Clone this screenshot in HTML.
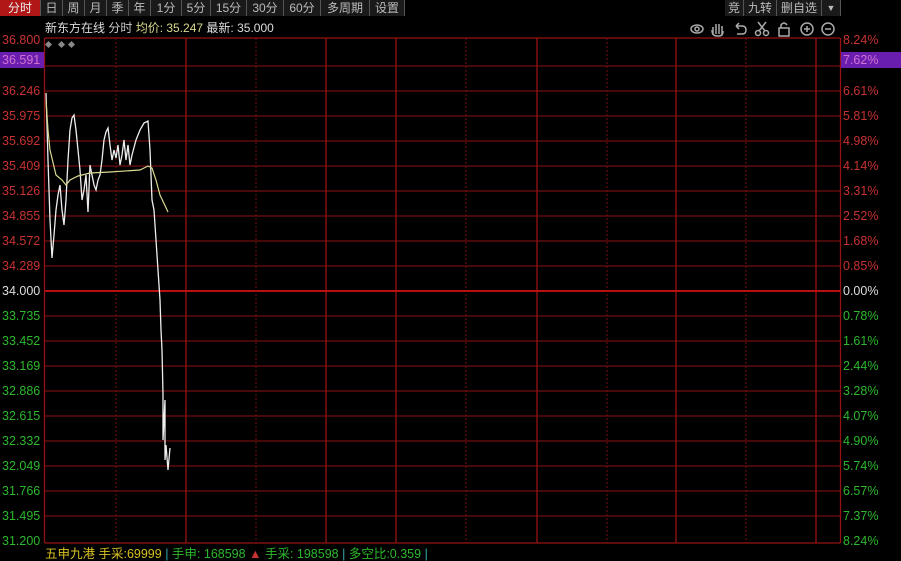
<!DOCTYPE html>
<html><head><meta charset="utf-8"><style>
html,body{margin:0;padding:0;background:#000;width:901px;height:552px;overflow:hidden;font-family:"Liberation Sans","Noto Sans CJK SC",sans-serif;}
.tabs{position:absolute;left:0;top:0;height:17px;width:901px;background:#000;}
.tab{position:absolute;top:0;height:16px;line-height:16px;font-size:12px;color:#bbb;background:#1a1a1a;border-right:1px solid #555;text-align:center}
.lab{position:absolute;font-size:12.5px;line-height:14px;}
</style></head><body>
<div class="tabs">
<div class="tab" style="left:0;width:40px;background:#b01818;color:#eee">分时</div>
<div class="tab" style="left:41px;width:21px">日</div>
<div class="tab" style="left:63px;width:21px">周</div>
<div class="tab" style="left:85px;width:21px">月</div>
<div class="tab" style="left:107px;width:21px">季</div>
<div class="tab" style="left:129px;width:21px">年</div>
<div class="tab" style="left:151px;width:30px">1分</div>
<div class="tab" style="left:182px;width:28px">5分</div>
<div class="tab" style="left:211px;width:35px">15分</div>
<div class="tab" style="left:247px;width:36px">30分</div>
<div class="tab" style="left:284px;width:36px">60分</div>
<div class="tab" style="left:321px;width:48px">多周期</div>
<div class="tab" style="left:370px;width:34px">设置</div>
<div class="tab" style="left:725px;width:18px">竞</div>
<div class="tab" style="left:744px;width:32px">九转</div>
<div class="tab" style="left:777px;width:44px">删自选</div>
<div class="tab" style="left:822px;width:18px;font-size:9px">▼</div>
</div>
<div class="lab" style="left:45px;top:21px;font-size:12px;color:#ddd">新东方在线 <span style="color:#ccc">分时</span> <span style="color:#d8d890">均价: 35.247</span> <span style="color:#ddd">最新: 35.000</span></div>
<svg style="position:absolute;left:0;top:0" width="901" height="552">
<g fill="none" stroke="#aaa" stroke-width="1.5">
<ellipse cx="697" cy="29" rx="6" ry="4"/><circle cx="697" cy="29" r="2"/>
<path d="M713 35 v-8 M716 34 v-10 M719 34 v-10 M722 34 v-8 M712 30 q0 6 5 6 h2 q4 0 4-5"/>
<path d="M736 26 h6 q4 0 4 4 t-4 4 h-5 M736 26 l3-3 M736 26 l3 3"/>
<circle cx="758" cy="33" r="2.5"/><circle cx="766" cy="33" r="2.5"/><path d="M759 31 l7-9 M765 31 l-7-9"/>
<rect x="779" y="28" width="10" height="8"/><path d="M781 28 v-3 q3-4 6 0"/>
<circle cx="807" cy="29" r="6"/><path d="M804 29 h6 M807 26 v6"/>
<circle cx="828" cy="29" r="6"/><path d="M825 29 h6"/>
</g>
<g fill="#888"><rect x="46" y="42" width="5" height="5" transform="rotate(45 48.5 44.5)"/><rect x="59" y="42" width="5" height="5" transform="rotate(45 61.5 44.5)"/><rect x="69" y="42" width="5" height="5" transform="rotate(45 71.5 44.5)"/></g>
<g stroke="#8c1010" stroke-width="1">
<path d="M45 66h795M45 91h795M45 116h795M45 141h795M45 166h795M45 191h795M45 216h795M45 241h795M45 266h795M45 316h795M45 341h795M45 366h795M45 391h795M45 416h795M45 441h795M45 466h795M45 491h795M45 516h795"/>
</g>
<g stroke="#961212" stroke-width="1.3">
<path d="M45 38h795M45 543h795M44.5 38v505M840.5 38v505M186 38v505M326 38v505M396 38v505M537 38v505M676 38v505M816 38v505"/>
</g>
<g stroke="#7a0e0e" stroke-width="1" stroke-dasharray="2,2">
<path d="M116 38v505M256 38v505M466 38v505M607 38v505M746 38v505"/>
</g>
<path d="M45 291h795" stroke="#b81010" stroke-width="2"/>
<polyline fill="none" stroke="#eee" stroke-width="1.3" points="46,93 47,125 48,160 50,220 52,258 54,235 56,210 58,195 60,185 62,210 64,225 66,200 68,160 70,130 72,118 74,115 76,130 78,150 80,170 82,200 84,190 86,175 88,212 90,165 92,175 94,185 96,190 98,180 100,175 102,160 104,140 106,132 108,128 110,145 112,160 114,150 116,158 118,145 120,165 122,155 124,140 126,160 128,145 130,165 132,155 136,140 140,130 144,123 148,121 150,150 152,200 154,210 156,240 158,270 160,300 161,330 162,350 163,395 163,440 165,400 165,460 166,445 168,470 170,448"/>
<polyline fill="none" stroke="#d8d890" stroke-width="1.2" points="46,100 48,130 50,150 56,175 62,180 66,185 70,180 78,176 90,173 110,172 140,170 148,166 152,168 156,180 160,195 168,212"/>
</svg>
<div style="position:absolute;left:0;top:52px;width:44px;height:16px;background:#6a1eb0"></div>
<div style="position:absolute;left:841px;top:52px;width:60px;height:16px;background:#6a1eb0"></div>
<div class="lab" style="left:2px;top:33px;color:#c83232">36.800</div>
<div class="lab" style="left:2px;top:53px;color:#d070d0">36.591</div>
<div class="lab" style="left:2px;top:84px;color:#c83232">36.246</div>
<div class="lab" style="left:2px;top:109px;color:#c83232">35.975</div>
<div class="lab" style="left:2px;top:134px;color:#c83232">35.692</div>
<div class="lab" style="left:2px;top:159px;color:#c83232">35.409</div>
<div class="lab" style="left:2px;top:184px;color:#c83232">35.126</div>
<div class="lab" style="left:2px;top:209px;color:#c83232">34.855</div>
<div class="lab" style="left:2px;top:234px;color:#c83232">34.572</div>
<div class="lab" style="left:2px;top:259px;color:#c83232">34.289</div>
<div class="lab" style="left:2px;top:284px;color:#ddd">34.000</div>
<div class="lab" style="left:2px;top:309px;color:#2db82d">33.735</div>
<div class="lab" style="left:2px;top:334px;color:#2db82d">33.452</div>
<div class="lab" style="left:2px;top:359px;color:#2db82d">33.169</div>
<div class="lab" style="left:2px;top:384px;color:#2db82d">32.886</div>
<div class="lab" style="left:2px;top:409px;color:#2db82d">32.615</div>
<div class="lab" style="left:2px;top:434px;color:#2db82d">32.332</div>
<div class="lab" style="left:2px;top:459px;color:#2db82d">32.049</div>
<div class="lab" style="left:2px;top:484px;color:#2db82d">31.766</div>
<div class="lab" style="left:2px;top:509px;color:#2db82d">31.495</div>
<div class="lab" style="left:2px;top:534px;color:#2db82d">31.200</div>
<div class="lab" style="left:843px;top:33px;color:#c83232">8.24%</div>
<div class="lab" style="left:843px;top:53px;color:#d070d0">7.62%</div>
<div class="lab" style="left:843px;top:84px;color:#c83232">6.61%</div>
<div class="lab" style="left:843px;top:109px;color:#c83232">5.81%</div>
<div class="lab" style="left:843px;top:134px;color:#c83232">4.98%</div>
<div class="lab" style="left:843px;top:159px;color:#c83232">4.14%</div>
<div class="lab" style="left:843px;top:184px;color:#c83232">3.31%</div>
<div class="lab" style="left:843px;top:209px;color:#c83232">2.52%</div>
<div class="lab" style="left:843px;top:234px;color:#c83232">1.68%</div>
<div class="lab" style="left:843px;top:259px;color:#c83232">0.85%</div>
<div class="lab" style="left:843px;top:284px;color:#ddd">0.00%</div>
<div class="lab" style="left:843px;top:309px;color:#2db82d">0.78%</div>
<div class="lab" style="left:843px;top:334px;color:#2db82d">1.61%</div>
<div class="lab" style="left:843px;top:359px;color:#2db82d">2.44%</div>
<div class="lab" style="left:843px;top:384px;color:#2db82d">3.28%</div>
<div class="lab" style="left:843px;top:409px;color:#2db82d">4.07%</div>
<div class="lab" style="left:843px;top:434px;color:#2db82d">4.90%</div>
<div class="lab" style="left:843px;top:459px;color:#2db82d">5.74%</div>
<div class="lab" style="left:843px;top:484px;color:#2db82d">6.57%</div>
<div class="lab" style="left:843px;top:509px;color:#2db82d">7.37%</div>
<div class="lab" style="left:843px;top:534px;color:#2db82d">8.24%</div>
<div class="lab" style="left:45px;top:547px;color:#d8c020;white-space:nowrap">五申九港 手采:69999 <span style="color:#3aa">|</span> <span style="color:#2db82d">手申: 168598</span> <span style="color:#c83232">▲</span> <span style="color:#2db82d">手采: 198598</span> <span style="color:#3aa">|</span> <span style="color:#2db82d">多空比:0.359</span> <span style="color:#3aa">|</span></div>
</body></html>
